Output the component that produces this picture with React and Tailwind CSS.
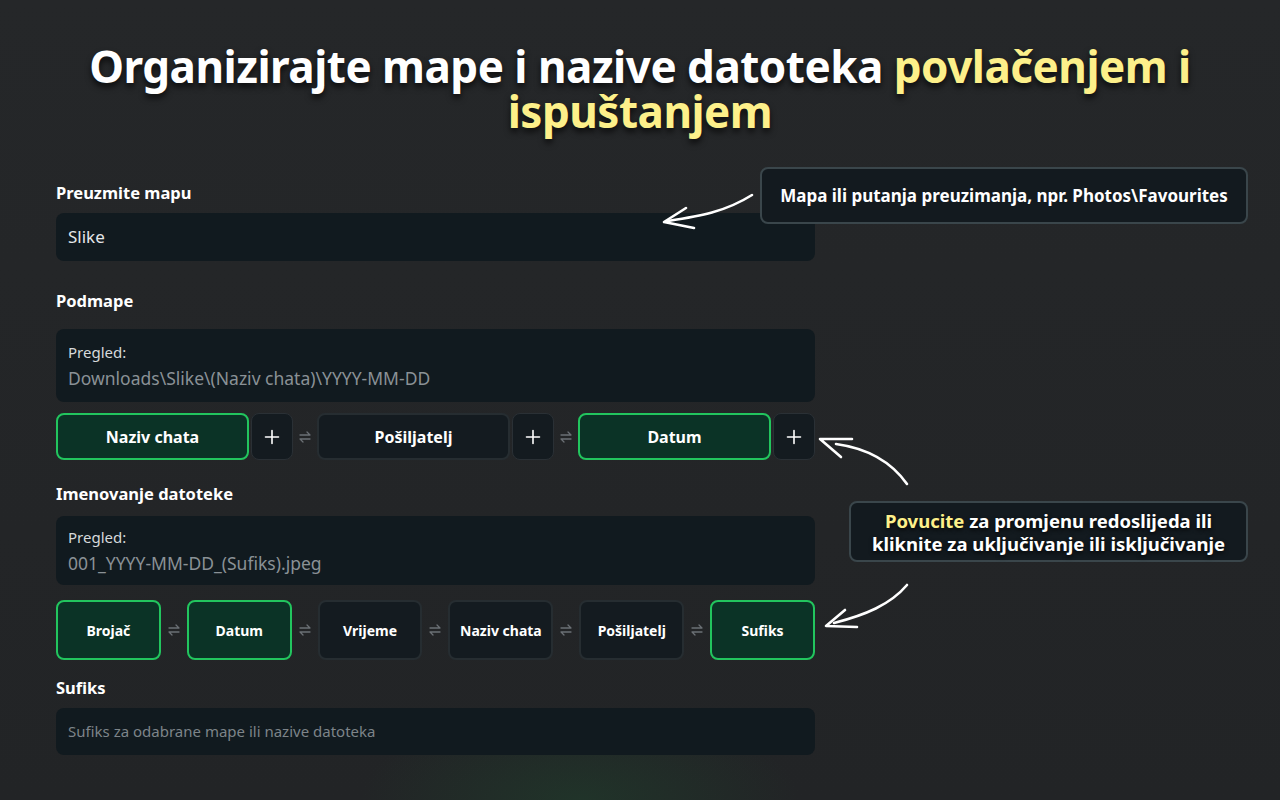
import React from 'react';

const font = { fontFamily: '"Noto Sans", "Open Sans", sans-serif' };

function SwapIcon() {
  return (
    <svg width="12" height="14" viewBox="0 0 12 14" className="shrink-0 text-[#6b7075]" fill="none" stroke="currentColor" strokeWidth="1.3" strokeLinecap="round">
      <path d="M1 5h10M8 2l3 3" />
      <path d="M11 9H1M4 12L1 9" />
    </svg>
  );
}

function Chip({ label, active, className = '' }) {
  return (
    <div
      className={
        'flex flex-1 items-center justify-center rounded-lg border-2 font-bold text-white ' +
        (active ? 'border-[#22c55e] bg-[#0b3326]' : 'border-[#262d31] bg-[#141b20]') +
        ' ' + className
      }
    >
      {label}
    </div>
  );
}

function PlusButton() {
  return (
    <div className="flex w-[42px] shrink-0 items-center justify-center rounded-lg border border-[#2a3035] bg-[#141b20] text-white">
      <svg width="16" height="16" viewBox="0 0 16 16" stroke="currentColor" strokeWidth="1.6" strokeLinecap="round">
        <path d="M8 1.5v13M1.5 8h13" />
      </svg>
    </div>
  );
}

function Label({ children, className = '' }) {
  return <div className={'text-[16.5px] font-bold leading-[22px] text-white ' + className}>{children}</div>;
}

function Preview({ value, className = '' }) {
  return (
    <div className={'flex flex-col justify-center gap-[5px] rounded-lg bg-[#111a1f] px-3 ' + className}>
      <div className="text-[15px] leading-[20px] text-[#d6d9db]">Pregled:</div>
      <div className="text-[17.5px] leading-[22px] text-[#8a9196]">{value}</div>
    </div>
  );
}

function Arrow({ d, head }) {
  return (
    <g fill="none" stroke="white" strokeWidth="2.6" strokeLinecap="round" strokeLinejoin="round">
      <path d={d} />
      <path d={head} />
    </g>
  );
}

export default function App() {
  return (
    <div
      style={font}
      className="relative h-[800px] w-full overflow-hidden bg-[#232527] bg-[radial-gradient(ellipse_220px_90px_at_580px_800px,rgba(30,70,45,0.45),transparent),linear-gradient(180deg,#252729_0%,#222426_100%)]"
    >
      <h1 className="pt-[44px] text-center text-[44px] font-bold leading-[45px] tracking-[-0.5px] text-white [text-shadow:0_4px_6px_rgba(0,0,0,0.7)]">
        Organizirajte mape i nazive datoteka <span className="text-[#fdf08a]">povlačenjem i</span>
        <br />
        <span className="text-[#fdf08a]">ispuštanjem</span>
      </h1>

      <div className="ml-[56px] mt-[48px] w-[759px]">
        <Label>Preuzmite mapu</Label>
        <div className="mt-[9px] flex h-[48px] items-center rounded-lg bg-[#111a1f] px-3 text-[17px] text-[#e5e7e9]">
          Slike
        </div>

        <Label className="mt-[29px]">Podmape</Label>
        <Preview className="mt-[17px] h-[73px]" value="Downloads\Slike\(Naziv chata)\YYYY-MM-DD" />
        <div className="mt-[11px] flex h-[47px] items-center gap-[6px]">
          <div className="flex h-full flex-1 gap-[2px]">
            <Chip label="Naziv chata" active className="text-[16px]" />
            <PlusButton />
          </div>
          <SwapIcon />
          <div className="flex h-full flex-1 gap-[2px]">
            <Chip label="Pošiljatelj" className="text-[16px]" />
            <PlusButton />
          </div>
          <SwapIcon />
          <div className="flex h-full flex-1 gap-[2px]">
            <Chip label="Datum" active className="text-[16px]" />
            <PlusButton />
          </div>
        </div>

        <Label className="mt-[23px]">Imenovanje datoteke</Label>
        <Preview className="mt-[11px] h-[69px]" value="001_YYYY-MM-DD_(Sufiks).jpeg" />
        <div className="mt-[15px] flex h-[60px] items-center gap-[7px]">
          <Chip label="Brojač" active className="h-full text-[14px]" />
          <SwapIcon />
          <Chip label="Datum" active className="h-full text-[14px]" />
          <SwapIcon />
          <Chip label="Vrijeme" className="h-full text-[14px]" />
          <SwapIcon />
          <Chip label="Naziv chata" className="h-full text-[14px]" />
          <SwapIcon />
          <Chip label="Pošiljatelj" className="h-full text-[14px]" />
          <SwapIcon />
          <Chip label="Sufiks" active className="h-full text-[14px]" />
        </div>

        <Label className="mt-[17px]">Sufiks</Label>
        <div className="mt-[9px] flex h-[47px] items-center rounded-lg bg-[#111a1f] px-3 text-[15px] text-[#7d8489]">
          Sufiks za odabrane mape ili nazive datoteka
        </div>
      </div>

      <div className="absolute left-[760px] top-[167px] flex h-[57px] w-[488px] items-center justify-center rounded-lg border-2 border-[#3a464b] bg-[#131a1f] text-[17px] font-bold text-white">
        Mapa ili putanja preuzimanja, npr. Photos\Favourites
      </div>

      <div className="absolute left-[849px] top-[501px] flex h-[61px] w-[399px] items-center justify-center rounded-lg border-2 border-[#3a464b] bg-[#131a1f] text-center text-[18.5px] font-bold leading-[23px] text-white [text-shadow:0_2px_4px_rgba(0,0,0,0.8)]">
        <div>
          <span className="text-[#fdf08a]">Povucite</span> za promjenu redoslijeda ili
          <br />
          kliknite za uključivanje ili isključivanje
        </div>
      </div>

      <svg className="pointer-events-none absolute left-0 top-0" width="1280" height="800">
        <Arrow d="M752 195 C725 212 700 216 668 221" head="M686 208 L664 222 L694 228" />
        <Arrow d="M907 484 C890 460 865 448 836 444" head="M852 439 L820 439 L841 457" />
        <Arrow d="M907 585 C890 605 865 615 834 623" head="M845 610 L826 626 L857 627" />
      </svg>
    </div>
  );
}
